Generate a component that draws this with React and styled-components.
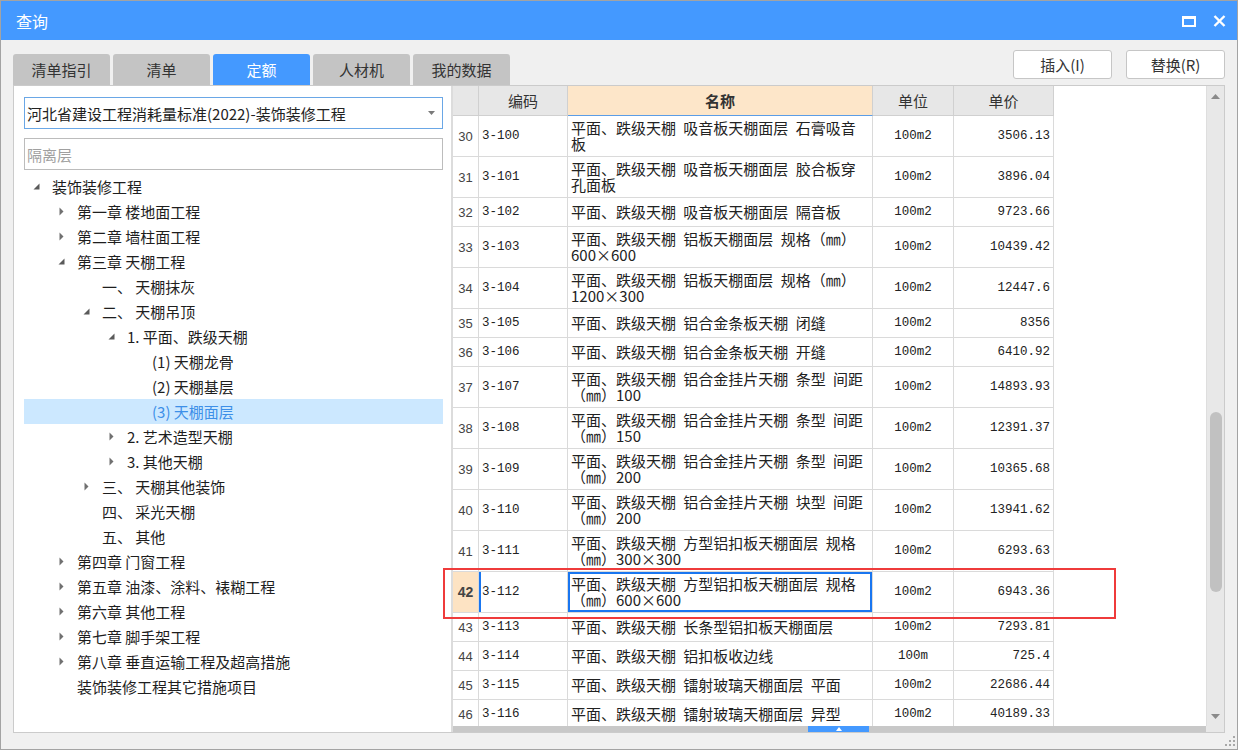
import React from 'react'
import styled, { createGlobalStyle } from 'styled-components'

const GlobalStyle = createGlobalStyle`
  html, body {
    margin: 0;
    padding: 0;
    background: #ffffff;
  }
  body {
    font-family: "Noto Sans CJK SC", "Microsoft YaHei", sans-serif;
  }
`

const CJK = '"Noto Sans CJK SC", "Microsoft YaHei", sans-serif'
const MONO = '"Liberation Mono", "Noto Sans CJK SC", monospace'
const COLS = '26px 89px 305px 81px 100px'

const Window = styled.div`
  position: relative;
  width: 1238px;
  height: 750px;
  box-sizing: border-box;
  border: 1px solid #a3a3a3;
  background: #f0f0f0;
  display: flex;
  flex-direction: column;
  overflow: hidden;
`
const TitleBar = styled.div`
  height: 39px;
  flex: none;
  background: #4499ff;
  display: flex;
  align-items: center;
  justify-content: space-between;
  padding: 0 11px 0 15px;
  color: #ffffff;
  font-family: ${CJK};
  font-size: 16px;
`
const TitleIcons = styled.div`
  display: flex;
  align-items: center;
  gap: 17px;
`
const Body = styled.div`
  flex: 1;
  display: flex;
  flex-direction: column;
  padding: 10px 12px 0 12px;
  min-height: 0;
`
const Toolbar = styled.div`
  height: 35px;
  display: flex;
  justify-content: space-between;
  align-items: flex-start;
`
const Tabs = styled.div`
  align-self: flex-end;
  display: flex;
  gap: 3px;
`
const Tab = styled.div`
  width: 97px;
  height: 31px;
  border-radius: 3px 3px 0 0;
  background: ${p => (p.$active ? '#4499ff' : '#c4c4c4')};
  color: ${p => (p.$active ? '#ffffff' : '#333333')};
  font-size: 15px;
  display: flex;
  align-items: center;
  justify-content: center;
`
const Buttons = styled.div`
  display: flex;
  gap: 14px;
`
const Button = styled.div`
  width: 99px;
  height: 29px;
  box-sizing: border-box;
  border: 1px solid #c6c6c6;
  border-radius: 3px;
  background: #ffffff;
  color: #333333;
  font-size: 15px;
  display: flex;
  align-items: center;
  justify-content: center;
`
const Panel = styled.div`
  height: 648px;
  box-sizing: border-box;
  border: 1px solid #cbcbcb;
  display: flex;
  flex: none;
`
const LeftPanel = styled.div`
  width: 437px;
  flex: none;
  box-sizing: border-box;
  background: #ffffff;
  padding: 11px 8px 0 10px;
  display: flex;
  flex-direction: column;
`
const Combo = styled.div`
  height: 32px;
  box-sizing: border-box;
  border: 1px solid #6aa7e6;
  display: flex;
  align-items: center;
  justify-content: space-between;
  padding: 0 7px 0 2px;
  font-size: 15px;
  color: #222222;
`
const SearchBox = styled.div`
  margin-top: 9px;
  height: 32px;
  box-sizing: border-box;
  border: 1px solid #bcbcbc;
  display: flex;
  align-items: center;
  padding-left: 2px;
  font-size: 15px;
  color: #a0a0a0;
`
const Tree = styled.div`
  margin-top: 4px;
  display: flex;
  flex-direction: column;
`
const TreeRow = styled.div`
  height: 25px;
  display: flex;
  align-items: center;
  padding-left: ${p => 4 + p.$level * 25}px;
  background: ${p => (p.$selected ? '#cce8ff' : 'transparent')};
  color: ${p => (p.$selected ? '#3d8fe8' : '#1e1e1e')};
  font-size: 15px;
  white-space: pre;
`
const Toggle = styled.span`
  width: 16px;
  height: 25px;
  flex: none;
  display: flex;
  align-items: center;
  justify-content: center;
  margin-right: 8px;
`
const Splitter = styled.div`
  width: 2px;
  flex: none;
  background: #dcdcdc;
`
const TableArea = styled.div`
  flex: 1;
  display: flex;
  flex-direction: column;
  min-width: 0;
`
const MainRow = styled.div`
  flex: 1;
  display: flex;
  min-height: 0;
`
const GridWrap = styled.div`
  flex: 1;
  background: #ffffff;
  overflow: hidden;
`
const Row = styled.div`
  display: grid;
  grid-template-columns: ${COLS};
  width: 601px;
  height: ${p => p.$h}px;
`
const HeadCell = styled.div`
  box-sizing: border-box;
  border-right: 1px solid #d0d0d0;
  border-bottom: 1px solid ${p => (p.$accent ? '#5b9de6' : '#d0d0d0')};
  background: ${p => (p.$accent ? '#fde6c9' : '#e7e7e7')};
  font-weight: ${p => (p.$accent ? 'bold' : 'normal')};
  color: #333333;
  font-size: 15px;
  display: flex;
  align-items: center;
  justify-content: center;
`
const Cell = styled.div`
  box-sizing: border-box;
  border-right: 1px solid #dadada;
  border-bottom: 1px solid #dadada;
  display: flex;
  align-items: center;
  overflow: hidden;
  white-space: pre;
  color: #222222;
`
const NumCell = styled(Cell)`
  justify-content: center;
  font-family: "Liberation Sans", Arial, sans-serif;
  font-size: ${p => (p.$current ? 14 : 13)}px;
  font-weight: ${p => (p.$current ? 'bold' : 'normal')};
  color: #444444;
  background: ${p => (p.$current ? '#fde3c3' : '#ffffff')};
`
const CodeCell = styled(Cell)`
  padding-left: 3px;
  font-family: ${MONO};
  font-size: 12.5px;
  box-shadow: ${p => (p.$current ? 'inset 2px 0 0 #1976f0' : 'none')};
`
const NameCell = styled(Cell)`
  padding-left: 3px;
  font-family: ${CJK};
  font-size: 15px;
  line-height: 16px;
  word-spacing: 4px;
  box-shadow: ${p => (p.$current ? 'inset 0 0 0 2px #1976f0' : 'none')};
`
const UnitCell = styled(Cell)`
  justify-content: center;
  font-family: ${MONO};
  font-size: 12.5px;
`
const PriceCell = styled(Cell)`
  justify-content: flex-end;
  padding-right: 3px;
  font-family: ${MONO};
  font-size: 12.5px;
`
const VScroll = styled.div`
  width: 18px;
  flex: none;
  box-sizing: border-box;
  background: #e8e8e8;
  border-left: 1px solid #dedede;
  display: flex;
  flex-direction: column;
  align-items: center;
`
const ScrollArrow = styled.div`
  height: 20px;
  flex: none;
  display: flex;
  align-items: center;
  justify-content: center;
`
const VThumb = styled.div`
  margin-top: 306px;
  width: 12px;
  height: 180px;
  border-radius: 6px;
  background: #c1c1c1;
`
const Spacer = styled.div`
  flex: 1;
`
const HScrollRow = styled.div`
  height: 6px;
  flex: none;
  display: flex;
`
const HTrack = styled.div`
  flex: 1;
  background: #c8c8c8;
  display: flex;
`
const HThumb = styled.div`
  margin-left: 355px;
  width: 61px;
  background: #4499ff;
  display: flex;
  align-items: center;
  justify-content: center;
`
const Corner = styled.div`
  width: 18px;
  background: #e8e8e8;
`
const Footer = styled.div`
  flex: 1;
  display: flex;
  justify-content: flex-end;
  align-items: flex-end;
  padding: 0 0 3px 0;
  margin-right: -10px;
`
const Annotation = styled.div`
  position: absolute;
  left: 442px;
  top: 567px;
  width: 673px;
  height: 51px;
  box-sizing: border-box;
  border: 2.5px solid #ef3b3b;
  pointer-events: none;
`

const treeItems = [
  { level: 0, state: 'open', text: '装饰装修工程' },
  { level: 1, state: 'closed', text: '第一章 楼地面工程' },
  { level: 1, state: 'closed', text: '第二章 墙柱面工程' },
  { level: 1, state: 'open', text: '第三章 天棚工程' },
  { level: 2, state: 'leaf', text: '一、 天棚抹灰' },
  { level: 2, state: 'open', text: '二、 天棚吊顶' },
  { level: 3, state: 'open', text: '1. 平面、跌级天棚' },
  { level: 4, state: 'leaf', text: '(1) 天棚龙骨' },
  { level: 4, state: 'leaf', text: '(2) 天棚基层' },
  { level: 4, state: 'leaf', text: '(3) 天棚面层', selected: true },
  { level: 3, state: 'closed', text: '2. 艺术造型天棚' },
  { level: 3, state: 'closed', text: '3. 其他天棚' },
  { level: 2, state: 'closed', text: '三、 天棚其他装饰' },
  { level: 2, state: 'leaf', text: '四、 采光天棚' },
  { level: 2, state: 'leaf', text: '五、 其他' },
  { level: 1, state: 'closed', text: '第四章 门窗工程' },
  { level: 1, state: 'closed', text: '第五章 油漆、涂料、裱糊工程' },
  { level: 1, state: 'closed', text: '第六章 其他工程' },
  { level: 1, state: 'closed', text: '第七章 脚手架工程' },
  { level: 1, state: 'closed', text: '第八章 垂直运输工程及超高措施' },
  { level: 1, state: 'leaf', text: '装饰装修工程其它措施项目' },
]

const P = '平面、跌级天棚 '
const rows = [
  [30, '3-100', P + '吸音板天棚面层 石膏吸音\n板', '100m2', '3506.13'],
  [31, '3-101', P + '吸音板天棚面层 胶合板穿\n孔面板', '100m2', '3896.04'],
  [32, '3-102', P + '吸音板天棚面层 隔音板', '100m2', '9723.66'],
  [33, '3-103', P + '铝板天棚面层 规格（㎜）\n600×600', '100m2', '10439.42'],
  [34, '3-104', P + '铝板天棚面层 规格（㎜）\n1200×300', '100m2', '12447.6'],
  [35, '3-105', P + '铝合金条板天棚 闭缝', '100m2', '8356'],
  [36, '3-106', P + '铝合金条板天棚 开缝', '100m2', '6410.92'],
  [37, '3-107', P + '铝合金挂片天棚 条型 间距\n（㎜）100', '100m2', '14893.93'],
  [38, '3-108', P + '铝合金挂片天棚 条型 间距\n（㎜）150', '100m2', '12391.37'],
  [39, '3-109', P + '铝合金挂片天棚 条型 间距\n（㎜）200', '100m2', '10365.68'],
  [40, '3-110', P + '铝合金挂片天棚 块型 间距\n（㎜）200', '100m2', '13941.62'],
  [41, '3-111', P + '方型铝扣板天棚面层 规格\n（㎜）300×300', '100m2', '6293.63'],
  [42, '3-112', P + '方型铝扣板天棚面层 规格\n（㎜）600×600', '100m2', '6943.36'],
  [43, '3-113', P + '长条型铝扣板天棚面层', '100m2', '7293.81'],
  [44, '3-114', P + '铝扣板收边线', '100m', '725.4'],
  [45, '3-115', P + '镭射玻璃天棚面层 平面', '100m2', '22686.44'],
  [46, '3-116', P + '镭射玻璃天棚面层 异型', '100m2', '40189.33'],
]

const TreeToggle = ({ state }) => {
  if (state === 'open') {
    return (
      <svg width="7" height="7" viewBox="0 0 7 7">
        <path d="M6.5 0.5 L6.5 6.5 L0.5 6.5 Z" fill="#5a5a5a" />
      </svg>
    )
  }
  if (state === 'closed') {
    return (
      <svg width="5" height="9" viewBox="0 0 5 9">
        <path d="M0.5 0.5 L4.5 4.5 L0.5 8.5 Z" fill="#707070" />
      </svg>
    )
  }
  return null
}

const App = () => (
  <>
    <GlobalStyle />
    <Window>
      <TitleBar>
        <span>查询</span>
        <TitleIcons>
          <svg width="14" height="12" viewBox="0 0 14 12">
            <rect x="1" y="2" width="12" height="9" fill="none" stroke="#fff" strokeWidth="2" />
            <rect x="0" y="1" width="14" height="3" fill="#fff" />
          </svg>
          <svg width="13" height="12" viewBox="0 0 13 12">
            <path d="M1.5 1 L11.5 11 M11.5 1 L1.5 11" stroke="#fff" strokeWidth="2.4" />
          </svg>
        </TitleIcons>
      </TitleBar>
      <Body>
        <Toolbar>
          <Tabs>
            {['清单指引', '清单', '定额', '人材机', '我的数据'].map(t => (
              <Tab key={t} $active={t === '定额'}>
                {t}
              </Tab>
            ))}
          </Tabs>
          <Buttons>
            <Button>插入(I)</Button>
            <Button>替换(R)</Button>
          </Buttons>
        </Toolbar>
        <Panel>
          <LeftPanel>
            <Combo>
              <span>河北省建设工程消耗量标准(2022)-装饰装修工程</span>
              <svg width="7" height="4" viewBox="0 0 7 4">
                <path d="M0 0 L7 0 L3.5 4 Z" fill="#7a7a7a" />
              </svg>
            </Combo>
            <SearchBox>隔离层</SearchBox>
            <Tree>
              {treeItems.map(item => (
                <TreeRow
                  key={item.text}
                  $level={item.level}
                  $selected={item.selected}
                >
                  <Toggle>
                    <TreeToggle state={item.state} />
                  </Toggle>
                  {item.text}
                </TreeRow>
              ))}
            </Tree>
          </LeftPanel>
          <Splitter />
          <TableArea>
            <MainRow>
              <GridWrap>
                <Row $h={30}>
                  <HeadCell />
                  <HeadCell>编码</HeadCell>
                  <HeadCell $accent>名称</HeadCell>
                  <HeadCell>单位</HeadCell>
                  <HeadCell>单价</HeadCell>
                </Row>
                {rows.map(([no, code, name, unit, price]) => {
                  const current = no === 42
                  return (
                    <Row key={no} $h={name.includes('\n') ? 41 : 29}>
                      <NumCell $current={current}>{no}</NumCell>
                      <CodeCell $current={current}>{code}</CodeCell>
                      <NameCell $current={current}>{name}</NameCell>
                      <UnitCell>{unit}</UnitCell>
                      <PriceCell>{price}</PriceCell>
                    </Row>
                  )
                })}
              </GridWrap>
              <VScroll>
                <ScrollArrow>
                  <svg width="9" height="5" viewBox="0 0 9 5">
                    <path d="M0 5 L4.5 0 L9 5 Z" fill="#8a8a8a" />
                  </svg>
                </ScrollArrow>
                <VThumb />
                <Spacer />
                <ScrollArrow>
                  <svg width="9" height="5" viewBox="0 0 9 5">
                    <path d="M0 0 L4.5 5 L9 0 Z" fill="#8a8a8a" />
                  </svg>
                </ScrollArrow>
              </VScroll>
            </MainRow>
            <HScrollRow>
              <HTrack>
                <HThumb>
                  <svg width="6" height="4" viewBox="0 0 6 4">
                    <path d="M0 4 L3 0 L6 4 Z" fill="#ffffff" />
                  </svg>
                </HThumb>
              </HTrack>
              <Corner />
            </HScrollRow>
          </TableArea>
        </Panel>
        <Footer>
          <svg width="10" height="10" viewBox="0 0 10 10">
            <g fill="#a8a8a8">
              <rect x="8" y="0" width="2" height="2" />
              <rect x="4" y="4" width="2" height="2" />
              <rect x="8" y="4" width="2" height="2" />
              <rect x="0" y="8" width="2" height="2" />
              <rect x="4" y="8" width="2" height="2" />
              <rect x="8" y="8" width="2" height="2" />
            </g>
          </svg>
        </Footer>
      </Body>
      <Annotation />
    </Window>
  </>
)

export default App
